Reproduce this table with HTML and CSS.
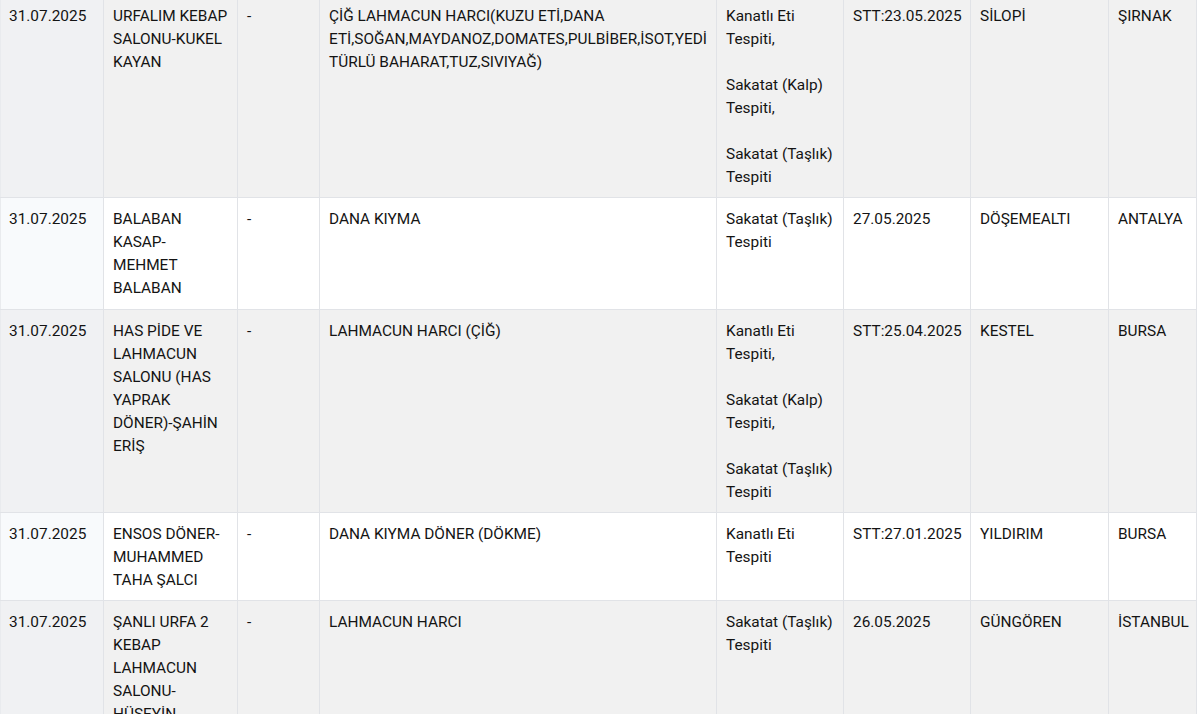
FILE: index.html
```html
<!DOCTYPE html>
<html lang="tr">
<head>
<meta charset="utf-8">
<title>Tablo</title>
<link rel="stylesheet" href="styles.css">
</head>
<body>
<div class="viewport">
<table class="list">
<colgroup>
<col class="c-date"><col class="c-firm"><col class="c-brand"><col class="c-product"><col class="c-issue"><col class="c-batch"><col class="c-district"><col class="c-city">
</colgroup>
<tbody>
<tr class="odd">
<td class="first">31.07.2025</td>
<td>URFALIM KEBAP SALONU-KUKEL KAYAN</td>
<td>-</td>
<td>ÇİĞ LAHMACUN HARCI(KUZU ETİ,DANA ETİ,SOĞAN,MAYDANOZ,DOMATES,PULBİBER,İSOT,YEDİ TÜRLÜ BAHARAT,TUZ,SIVIYAĞ)</td>
<td>Kanatlı Eti Tespiti,<br><br>Sakatat (Kalp) Tespiti,<br><br>Sakatat (Taşlık) Tespiti</td>
<td>STT:23.05.2025</td>
<td>SİLOPİ</td>
<td>ŞIRNAK</td>
</tr>
<tr class="even">
<td class="first">31.07.2025</td>
<td>BALABAN KASAP-MEHMET BALABAN</td>
<td>-</td>
<td>DANA KIYMA</td>
<td>Sakatat (Taşlık) Tespiti</td>
<td>27.05.2025</td>
<td>DÖŞEMEALTI</td>
<td>ANTALYA</td>
</tr>
<tr class="odd">
<td class="first">31.07.2025</td>
<td>HAS PİDE VE LAHMACUN SALONU (HAS YAPRAK DÖNER)-ŞAHİN ERİŞ</td>
<td>-</td>
<td>LAHMACUN HARCI (ÇİĞ)</td>
<td>Kanatlı Eti Tespiti,<br><br>Sakatat (Kalp) Tespiti,<br><br>Sakatat (Taşlık) Tespiti</td>
<td>STT:25.04.2025</td>
<td>KESTEL</td>
<td>BURSA</td>
</tr>
<tr class="even">
<td class="first">31.07.2025</td>
<td>ENSOS DÖNER-MUHAMMED TAHA ŞALCI</td>
<td>-</td>
<td>DANA KIYMA DÖNER (DÖKME)</td>
<td>Kanatlı Eti Tespiti</td>
<td>STT:27.01.2025</td>
<td>YILDIRIM</td>
<td>BURSA</td>
</tr>
<tr class="odd">
<td class="first">31.07.2025</td>
<td>ŞANLI URFA 2 KEBAP LAHMACUN SALONU-HÜSEYİN ÇELİKBAŞ</td>
<td>-</td>
<td>LAHMACUN HARCI</td>
<td>Sakatat (Taşlık) Tespiti</td>
<td>26.05.2025</td>
<td>GÜNGÖREN</td>
<td>İSTANBUL</td>
</tr>
</tbody>
</table>
</div>
</body>
</html>
```

FILE: styles.css
```css
html, body {
  margin: 0;
  padding: 0;
  background: #ffffff;
}
.viewport {
  height: 714px;
  overflow: hidden;
}
.list {
  margin-top: -6px;
  width: 1196px;
  table-layout: fixed;
  border-collapse: collapse;
  font-family: Roboto, "Liberation Sans", sans-serif;
  font-size: 15.4px;
  line-height: 23px;
  color: #141414;
}
.c-date { width: 103px; }
.c-firm { width: 134px; }
.c-brand { width: 82px; }
.c-product { width: 397px; }
.c-issue { width: 127px; }
.c-batch { width: 127px; }
.c-district { width: 138px; }
.c-city { width: 88px; }
.list td {
  vertical-align: top;
  padding: 10px 8px 8.3px 9px;
  border: 1px solid #e1e3e7;
}
.list td.first {
  padding-left: 8px;
  border-left: 1px solid #e9ebee;
}
.list td:last-child {
  padding-right: 2px;
}
.odd td { background: #f1f1f1; }
.odd td.first { background: #f0f1f3; }
.even td { background: #ffffff; }
.even td.first { background: #f8fafc; }
```
